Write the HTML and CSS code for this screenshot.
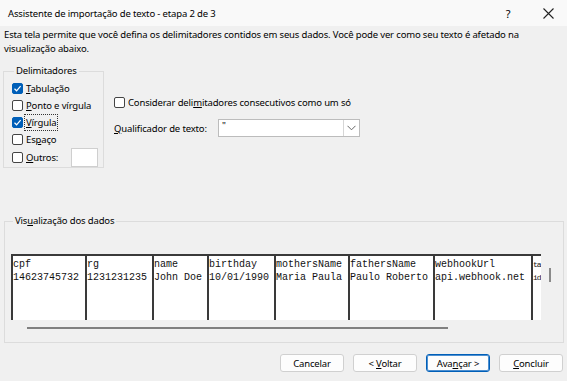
FILE: index.html
```html
<!DOCTYPE html>
<html lang="pt-BR">
<head>
    <meta charset="UTF-8">
    <meta name="viewport" content="width=device-width, initial-scale=1.0">
    <title>Assistente de importação de texto</title>
    <link rel="stylesheet" href="styles.css">
</head>
<body>
    <div class="titlebar">
        <span class="title">Assistente de importação de texto - etapa 2 de 3</span>
        <span class="help">?</span>
        <span class="close">
            <svg width="11" height="11" viewBox="0 0 11 11"><path d="M0.5 0.5 L10.5 10.5 M10.5 0.5 L0.5 10.5" stroke="#222" stroke-width="1.1"/></svg>
        </span>
    </div>

    <p class="intro">Esta tela permite que você defina os delimitadores contidos em seus dados. Você pode ver como seu texto é afetado na visualização abaixo.</p>

    <div class="options">
        <fieldset class="group delims">
            <legend>Delimitadores</legend>
            <div class="check-row"><span class="box checked"><svg width="9" height="9" viewBox="0 0 9 9"><path d="M1.5 4.8 L3.6 6.8 L7.6 2.2" fill="none" stroke="#fff" stroke-width="1.2"/></svg></span><span><u>T</u>abulação</span></div>
            <div class="check-row"><span class="box"></span><span><u>P</u>onto e vírgula</span></div>
            <div class="check-row"><span class="box checked"><svg width="9" height="9" viewBox="0 0 9 9"><path d="M1.5 4.8 L3.6 6.8 L7.6 2.2" fill="none" stroke="#fff" stroke-width="1.2"/></svg></span><span class="focused"><u>V</u>írgula</span></div>
            <div class="check-row"><span class="box"></span><span>Es<u>p</u>aço</span></div>
            <div class="check-row other"><span class="box"></span><span class="other-label"><u>O</u>utros:</span><span class="other-input"></span></div>
        </fieldset>

        <div class="side">
            <div class="check-row"><span class="box"></span><span>Considerar deli<u>m</u>itadores consecutivos como um só</span></div>
            <div class="qualifier">
                <span class="q-label"><u>Q</u>ualificador de texto:</span>
                <div class="combo">
                    <span class="combo-value">"</span>
                    <span class="combo-arrow">
                        <svg width="9" height="6" viewBox="0 0 9 6"><path d="M0.5 0.8 L4.5 4.8 L8.5 0.8" fill="none" stroke="#666" stroke-width="1"/></svg>
                    </span>
                </div>
            </div>
        </div>
    </div>

    <fieldset class="group preview">
        <legend>Vis<u>u</u>alização dos dados</legend>
        <div class="preview-body">
            <div class="grid">
                <div class="col w74"><div>cpf</div><div>14623745732</div></div>
                <div class="col w67"><div>rg</div><div>1231231235</div></div>
                <div class="col w55"><div>name</div><div>John Doe</div></div>
                <div class="col w67"><div>birthday</div><div>10/01/1990</div></div>
                <div class="col w74"><div>mothersName</div><div>Maria Paula</div></div>
                <div class="col w85"><div>fathersName</div><div>Paulo Roberto</div></div>
                <div class="col w98"><div>webhookUrl</div><div>api.webhook.net</div></div>
                <div class="col w10 last"><div>ta</div><div>id</div></div>
            </div>
            <div class="vscroll"><span class="vthumb"></span></div>
        </div>
        <div class="hscroll"><span class="hthumb"></span></div>
    </fieldset>

    <div class="buttons">
        <button>Cancelar</button>
        <button>&lt; <u>V</u>oltar</button>
        <button class="default">Ava<u>n</u>çar &gt;</button>
        <button><u>C</u>oncluir</button>
    </div>
</body>
</html>
```

FILE: styles.css
```css
body {
    margin: 0;
    width: 567px;
    height: 381px;
    overflow: hidden;
    background: #f0f0f0;
    font-family: "Noto Sans", "Open Sans", sans-serif;
    font-size: 9.5px;
    letter-spacing: -0.15px;
    color: #000;
}

.titlebar {
    height: 26px;
    display: flex;
    align-items: center;
    background: #f9f9f9;
    padding-left: 8px;
}

.title {
    flex: 1;
}

.help {
    width: 12px;
    text-align: center;
    font-size: 11px;
    margin-right: 29px;
}

.close {
    width: 11px;
    height: 11px;
    margin-right: 13px;
    display: flex;
}

.intro {
    margin: 2px 4px 0;
    line-height: 14px;
}

.options {
    display: flex;
    margin-top: 8px;
}

.group {
    border: 1px solid #dcdcdc;
    margin: 0;
    min-width: 0;
}

.group legend {
    padding: 0 2px;
    margin-left: 2px;
    line-height: 14px;
}

.delims {
    margin-left: 3px;
    width: 101px;
    box-sizing: border-box;
    padding: 2px 0 1px 8px;
}

.check-row {
    display: flex;
    align-items: center;
    height: 17px;
    gap: 3px;
}

.box {
    width: 9px;
    height: 9px;
    border: 1px solid #444;
    border-radius: 2px;
    background: #fff;
    display: flex;
    align-items: center;
    justify-content: center;
}

.box.checked {
    background: #005fb8;
    border-color: #005fb8;
}

.focused {
    outline: 1px dotted #333;
    outline-offset: 1px;
}

.check-row.other {
    height: 18px;
}

.other-label {
    width: 42px;
}

.other-input {
    width: 25px;
    height: 17px;
    background: #fff;
    border: 1px solid #cfcfcf;
}

.side {
    margin-left: 10px;
    padding-top: 31px;
}

.side .check-row {
    height: 14px;
}

.qualifier {
    display: flex;
    align-items: center;
    margin-top: 10px;
}

.q-label {
    width: 104px;
}

.combo {
    width: 140px;
    height: 16px;
    background: #fff;
    border: 1px solid #bcbcbc;
    display: flex;
}

.combo-value {
    flex: 1;
    padding-left: 3px;
    line-height: 12px;
    color: #000;
}

.combo-arrow {
    width: 15px;
    border-left: 1px solid #d6d6d6;
    display: flex;
    align-items: center;
    justify-content: center;
}

.preview {
    margin: 46px 3px 0 4px;
    padding: 26px 0 0 6px;
    height: 101px;
}

.preview-body {
    display: flex;
}

.grid {
    display: flex;
    width: 530px;
    height: 64px;
    background: #fff;
    border-top: 2px solid #3a3a3a;
    overflow: hidden;
    font-family: "Liberation Mono", "Courier New", monospace;
    font-size: 10px;
    letter-spacing: 0;
    line-height: 13px;
    color: #111;
}

.col {
    border-left: 2px solid #3a3a3a;
    padding-top: 2px;
    overflow: hidden;
    white-space: nowrap;
    box-sizing: border-box;
    flex: none;
}

.col.last {
    border-right: 2px solid #3a3a3a;
    letter-spacing: -1px;
    font-size: 8px;
}

.w74 { width: 74px; }
.w67 { width: 67px; }
.w55 { width: 55px; }
.w85 { width: 85px; }
.w98 { width: 98px; }
.w10 { width: 12px; }

.vscroll {
    padding: 14px 0 0 8px;
}

.vthumb {
    display: block;
    width: 2px;
    height: 14px;
    background: #8a8a8a;
}

.hscroll {
    padding: 7px 0 0 16px;
}

.hthumb {
    display: block;
    width: 421px;
    height: 2px;
    background: #808080;
}

.buttons {
    display: flex;
    justify-content: flex-end;
    gap: 9px;
    margin-top: 11px;
    padding-right: 4px;
}

button {
    width: 64px;
    height: 18px;
    padding: 0;
    font-family: inherit;
    font-size: 9.5px;
    letter-spacing: -0.15px;
    background: #fdfdfd;
    border: 1px solid #d0d0d0;
    border-radius: 3px;
    color: #000;
}

button.default {
    border: 1px solid #005fb8;
    box-shadow: inset 0 0 0 1px #4d8fd0;
}
```
